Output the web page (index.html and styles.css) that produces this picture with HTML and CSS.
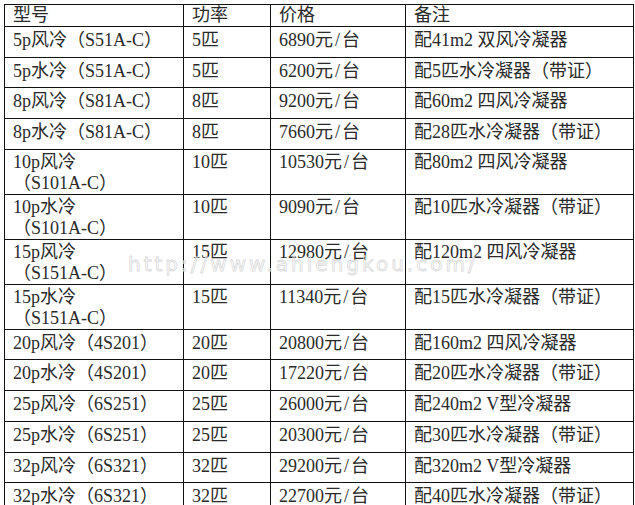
FILE: index.html
```html
<!DOCTYPE html>
<html lang="zh-CN">
<head>
<meta charset="utf-8">
<title>价格表</title>
<link rel="stylesheet" href="styles.css">
</head>
<body>
<div class="page">
  <table class="spec">
    <colgroup>
      <col class="c1"><col class="c2"><col class="c3"><col class="c4">
    </colgroup>
    <thead>
      <tr class="head"><th>型号</th><th>功率</th><th>价格</th><th>备注</th></tr>
    </thead>
    <tbody>
      <tr class="one"><td>5p风冷（S51A-C）</td><td>5匹</td><td>6890元<span class="sl">/</span>台</td><td>配41m2 双风冷凝器</td></tr>
      <tr class="one"><td>5p水冷（S51A-C）</td><td>5匹</td><td>6200元<span class="sl">/</span>台</td><td>配5匹水冷凝器（带证）</td></tr>
      <tr class="one"><td>8p风冷（S81A-C）</td><td>8匹</td><td>9200元<span class="sl">/</span>台</td><td>配60m2 四风冷凝器</td></tr>
      <tr class="one"><td>8p水冷（S81A-C）</td><td>8匹</td><td>7660元<span class="sl">/</span>台</td><td>配28匹水冷凝器（带证）</td></tr>
      <tr class="two"><td>10p风冷<br>（S101A-C）</td><td>10匹</td><td>10530元<span class="sl">/</span>台</td><td>配80m2 四风冷凝器</td></tr>
      <tr class="two"><td>10p水冷<br>（S101A-C）</td><td>10匹</td><td>9090元<span class="sl">/</span>台</td><td>配10匹水冷凝器（带证）</td></tr>
      <tr class="two"><td>15p风冷<br>（S151A-C）</td><td>15匹</td><td>12980元<span class="sl">/</span>台</td><td>配120m2 四风冷凝器</td></tr>
      <tr class="two"><td>15p水冷<br>（S151A-C）</td><td>15匹</td><td>11340元<span class="sl">/</span>台</td><td>配15匹水冷凝器（带证）</td></tr>
      <tr class="one"><td>20p风冷（4S201）</td><td>20匹</td><td>20800元<span class="sl">/</span>台</td><td>配160m2 四风冷凝器</td></tr>
      <tr class="one"><td>20p水冷（4S201）</td><td>20匹</td><td>17220元<span class="sl">/</span>台</td><td>配20匹水冷凝器（带证）</td></tr>
      <tr class="one"><td>25p风冷（6S251）</td><td>25匹</td><td>26000元<span class="sl">/</span>台</td><td>配240m2 V型冷凝器</td></tr>
      <tr class="one"><td>25p水冷（6S251）</td><td>25匹</td><td>20300元<span class="sl">/</span>台</td><td>配30匹水冷凝器（带证）</td></tr>
      <tr class="one"><td>32p风冷（6S321）</td><td>32匹</td><td>29200元<span class="sl">/</span>台</td><td>配320m2 V型冷凝器</td></tr>
      <tr class="one"><td>32p水冷（6S321）</td><td>32匹</td><td>22700元<span class="sl">/</span>台</td><td>配40匹水冷凝器（带证）</td></tr>
    </tbody>
  </table>
  <div class="watermark">http://www.ahlengkou.com/</div>
</div>
</body>
</html>
```
FILE: styles.css
```css
html, body {
  margin: 0;
  padding: 0;
  background: #ffffff;
}

.page {
  position: relative;
  box-sizing: border-box;
  width: 635px;
  height: 505px;
  padding: 4px 0 0 4px;
  overflow: hidden;
}

.spec {
  border-collapse: collapse;
  table-layout: fixed;
  width: 629px;
  font-family: "Liberation Serif", "Noto Sans CJK SC", serif;
  font-size: 18px;
  color: #2a2a2a;
}

.c1 { width: 179px; }
.c2 { width: 87px; }
.c3 { width: 135px; }
.c4 { width: 228px; }

.spec th,
.spec td {
  border: 1px solid #111111;
  padding: 3px 0 0 8px;
  vertical-align: top;
  text-align: left;
  font-weight: normal;
  line-height: 21px;
  white-space: nowrap;
  overflow: hidden;
}

.spec th {
  padding-top: 0;
  line-height: 20px;
}

.head { height: 22px; }
.one { height: 30.7px; }
.two { height: 45px; }
.two td { padding-top: 2px; }

.sl {
  margin: 0 2px;
}

.watermark {
  position: absolute;
  left: 128px;
  top: 252px;
  font-family: "DejaVu Sans", sans-serif;
  font-size: 20px;
  letter-spacing: 3px;
  color: rgba(255, 255, 255, 0);
  -webkit-text-stroke: 0.8px #dadada;
  pointer-events: none;
}
```
